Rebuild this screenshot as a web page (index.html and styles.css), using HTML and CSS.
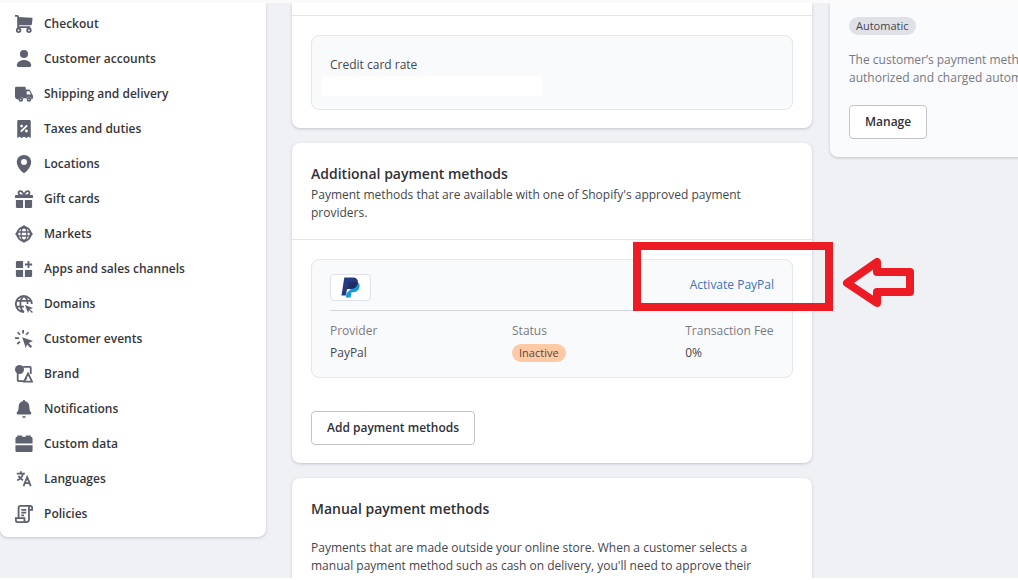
FILE: index.html
```html
<!DOCTYPE html>
<html lang="en">
<head>
    <meta charset="UTF-8">
    <meta name="viewport" content="width=device-width, initial-scale=1.0">
    <title>Payments</title>
    <link rel="stylesheet" href="styles.css">
</head>
<body>

    <div class="page">
        <nav class="sidebar">
            <a href="#"><svg viewBox="0 0 20 20"><path d="M0 1h2.500a1 1 0 0 1 1 1v11.500H17" class="line"/><path d="M3 2.200 18.500 3a1 1 0 0 1 1 1.100l-.8 6.500a1 1 0 0 1-1 .9H3z"/><circle cx="4" cy="17" r="2" class="line"/><circle cx="15.500" cy="17" r="2" class="line"/></svg>Checkout</a>
            <a href="#"><svg viewBox="0 0 20 20"><circle cx="10" cy="4.500" r="4.500"/><path d="M2 17c0-3.500 3.500-6 8-6s8 2.500 8 6c0 1.200-.8 2-2 2H4c-1.200 0-2-.8-2-2z"/></svg>Customer accounts</a>
            <a href="#"><svg viewBox="0 0 20 20"><path fill-rule="evenodd" d="M1.500 2h9A1.500 1.500 0 0 1 12 3.500V5h3.200c.7 0 1.300.4 1.600 1l2.900 5.400c.2.400.3.800.3 1.200V14a2 2 0 0 1-1.600 2 3 3 0 0 0-5.900-.8c-.4-.3-1-.4-1.500-.4s-.9.100-1.300.4A3 3 0 0 0 4 16h-.5A3.500 3.500 0 0 1 0 12.500v-9A1.500 1.500 0 0 1 1.500 2zM13 7v3.500h4.700L15.900 7z"/><circle cx="6.500" cy="16" r="1.600" class="line"/><circle cx="15.500" cy="16" r="1.600" class="line"/></svg>Shipping and delivery</a>
            <a href="#"><svg viewBox="0 0 20 20"><path d="M4 0h12a1.500 1.500 0 0 1 1.500 1.500V20l-2.500-1.500-2.500 1.500-2.500-1.500L7.500 20 5 18.500 2.500 20V1.500A1.500 1.500 0 0 1 4 0z"/><path d="m6.500 13 7-7" class="cut"/><circle cx="7.300" cy="6.800" r="1.600" class="hole"/><circle cx="12.700" cy="12.200" r="1.600" class="hole"/></svg>Taxes and duties</a>
            <a href="#"><svg viewBox="0 0 20 20"><path fill-rule="evenodd" d="M10 0c-4.500 0-8 3.300-8 7.700C2 13.500 8.500 20 10 20s8-6.500 8-12.300C18 3.300 14.500 0 10 0zm0 4.500a3.300 3.300 0 1 1 0 6.600 3.300 3.300 0 0 1 0-6.600z"/></svg>Locations</a>
            <a href="#"><svg viewBox="0 0 20 20"><path d="M10 6C9 2.500 7.800 1.200 6 1.200S3.600 2.800 4 4.200 6.500 6 10 6zm0 0c1-3.500 2.200-4.800 4-4.800s2.400 1.600 2 3S13.500 6 10 6z" class="line"/><path d="M1 5.500h18a1 1 0 0 1 1 1V9H0V6.500a1 1 0 0 1 1-1zM1 11h8v9H2.500A1.500 1.500 0 0 1 1 18.500zM11 11h8v7.500a1.500 1.500 0 0 1-1.500 1.500H11z"/></svg>Gift cards</a>
            <a href="#"><svg viewBox="0 0 20 20"><circle cx="10" cy="10" r="7.500" class="line"/><ellipse cx="10" cy="10" rx="3.200" ry="7.500" class="thin"/><path d="M3 7.800h14M3 12.200h14" class="thin"/><path d="m10 0 4 3.500H6zm0 20-4-3.500h8zM0 10l3.500-4v8zm20 0-3.500 4V6z"/></svg>Markets</a>
            <a href="#"><svg viewBox="0 0 20 20"><path d="M2.500 1H9v8H1V2.500A1.500 1.500 0 0 1 2.500 1zM1 11h8v8H2.500A1.500 1.500 0 0 1 1 17.500zM11 11h8v6.500a1.500 1.500 0 0 1-1.500 1.500H11z"/><path d="M15 1v8M11 5h8" class="line"/></svg>Apps and sales channels</a>
            <a href="#"><svg viewBox="0 0 20 20"><path d="M18.700 10A8.900 8.900 0 1 0 10 18.900M10 1C7.500 2.600 6 6 6 10s1.500 7.400 4 8.900M10 1c2.500 1.600 4 5 4 9M2 6.500h16M2 13h8" class="line"/><path d="m11 11 9 3.500-3.500 1.300L20 19l-1.200 1-3.200-3.200L14.500 20z"/></svg>Domains</a>
            <a href="#"><svg viewBox="0 0 20 20"><path d="M9 0v4M3 2.500l2.500 2.800M15 2.500l-2.500 2.800M0 9h4.500M2.500 15.500l3-2.600" class="line"/><path d="m8 8 12 4.200-4.800 2.200 3.800 3.800-1.800 1.800-3.800-3.800L12 20z"/></svg>Customer events</a>
            <a href="#"><svg viewBox="0 0 20 20"><circle cx="5" cy="5" r="5"/><path d="M9 2h7.500a1 1 0 0 1 1 1v7M3 9v8a1 1 0 0 0 1 1h6l3-4M10 18.500l4.500-9 4.500 9z" class="line"/></svg>Brand</a>
            <a href="#"><svg viewBox="0 0 20 20"><path d="M10 0a1.300 1.300 0 0 1 1.300 1.500C14.500 2.200 16 4.500 16 8c0 4 1.500 4.800 2 6 .4 1-.2 2-1.200 2H3.200c-1 0-1.600-1-1.200-2 .5-1.200 2-2 2-6 0-3.500 1.500-5.800 4.700-6.500A1.300 1.300 0 0 1 10 0zM8 18h4a2 2 0 0 1-4 0z"/></svg>Notifications</a>
            <a href="#"><svg viewBox="0 0 20 20"><path d="M.5 9.500V4a2 2 0 0 1 2-2V.5H8V2h4V.5h5.500V2a2 2 0 0 1 2 2v5.500zM.5 11.500h19v6a1.500 1.500 0 0 1-1.500 1.500H2a1.500 1.500 0 0 1-1.500-1.500z"/></svg>Custom data</a>
            <a href="#"><svg viewBox="0 0 20 20"><path d="M2 4h9M6.500 1.500V4M9 4c-.8 3.500-3 6-6.500 7.500M4 6.500c1 2.500 3 4 5 4.700M9.500 18l4-10 4 10M11 14.500h5" class="line"/></svg>Languages</a>
            <a href="#"><svg viewBox="0 0 20 20"><path d="M4 14V3a2 2 0 0 1 2-2h11a2 2 0 0 1 2 2v2.500h-3.500M15.500 5V3a2 2 0 0 1 1.500-2M15.500 5v11.500a2.500 2.500 0 0 1-2.500 2.500H3a2 2 0 0 1-2-2v-2.500h9.500V17a2 2 0 0 0 2.500 2M7 5.500h5.500M7 8.500h5.500M7 11.500h3" class="line"/></svg>Policies</a>
        </nav>

        <main class="main">
            <section class="card card-cut">
                <div class="card-rest"></div>
                <div class="section">
                    <div class="box rate-box">
                        <p>Credit card rate</p>
                        <div class="rate-value"></div>
                    </div>
                </div>
            </section>

            <section class="card">
                <div class="intro">
                    <h2>Additional payment methods</h2>
                    <p>Payment methods that are available with one of Shopify's approved payment<br>providers.</p>
                </div>
                <div class="section">
                    <div class="box provider-box">
                        <div class="provider-head">
                            <span class="logo">
                                <svg viewBox="0 0 20 22" role="img" aria-label="PayPal"><path fill="#179bd7" d="M17.500 5.500c2 1.200 2.400 3 2 5-.9 4-3.600 5.500-7.300 5.500h-1.100l-1 5.500H5l.8-4.500z"/><path fill="#253b80" d="M3.500.5h8.300c4.200 0 6.600 2 5.900 5.800-.8 4.500-3.700 6.200-8 6.200H7.300c-.7 0-1 .4-1.100 1L5 19.500H.5z"/><path fill="#222d65" d="M8.200 5.300h6.300c1.200 0 2.200.2 3.100.7-.7 4.600-3.600 6.500-7.900 6.500H7.300l-.4.200 1-6.500c0-.5.100-.7.300-.9z"/></svg>
                            </span>
                            <a href="#" class="activate">Activate PayPal</a>
                        </div>
                        <table class="provider-info">
                            <thead>
                                <tr><th>Provider</th><th>Status</th><th>Transaction Fee</th></tr>
                            </thead>
                            <tbody>
                                <tr><td>PayPal</td><td><span class="badge badge-warning">Inactive</span></td><td>0%</td></tr>
                            </tbody>
                        </table>
                        <div class="highlight"></div>
                        <svg class="arrow" viewBox="0 0 72 52"><path d="M5 26 35 5v10h33v20H35v11z"/></svg>
                    </div>
                    <button type="button" class="btn">Add payment methods</button>
                </div>
            </section>

            <section class="card">
                <div class="manual">
                    <h2>Manual payment methods</h2>
                    <p>Payments that are made outside your online store. When a customer selects a<br>manual payment method such as cash on delivery, you'll need to approve their</p>
                </div>
            </section>
        </main>

        <aside class="capture">
            <span class="badge">Automatic</span>
            <p>The customer’s payment method is<br>authorized and charged automatically.</p>
            <button type="button" class="btn">Manage</button>
        </aside>
    </div>

</body>
</html>
```
FILE: styles.css
```css
* {
    box-sizing: border-box;
}
body {
    display: flex;
    height: 100vh;
    margin: 0;
    overflow: hidden;
    border-top: 3px solid #fafafb;
    border-bottom: 2px solid #fff;
    background-color: #f0f1f5;
    color: #45464b;
    font-family: "Segoe UI", "Open Sans", sans-serif;
    font-size: 12px;
    line-height: 18px;
}
h2,
p {
    margin: 0;
}
h2 {
    color: #303035;
    font-size: 14px;
    font-weight: 600;
    line-height: 20px;
}
.page {
    flex: 1;
    display: grid;
    grid-template-columns: 266px minmax(564px, 1fr) 280px;
    align-items: start;
}
.sidebar {
    display: flex;
    flex-direction: column;
    padding: 3px 15px 6px;
    border-radius: 0 0 8px 8px;
    background-color: #fff;
    box-shadow: 0 1px 3px rgba(60, 60, 80, 0.25);
}
.sidebar a {
    display: flex;
    align-items: center;
    gap: 11px;
    height: 35px;
    color: #35363b;
    font-weight: 600;
    text-decoration: none;
}
.sidebar svg {
    width: 18px;
    height: 18px;
    fill: #5e6270;
}
.sidebar .line,
.sidebar .thin {
    fill: none;
    stroke: #5e6270;
    stroke-width: 2;
}
.sidebar .thin {
    stroke-width: 1.5;
}
.sidebar .hole {
    fill: #fff;
}
.sidebar .cut {
    stroke: #fff;
    stroke-width: 2;
}
.main {
    display: flex;
    flex-direction: column;
    gap: 15px;
    margin: 0 18px 0 26px;
}
.card {
    border-radius: 8px;
    background-color: #fff;
    box-shadow: 0 1px 3px rgba(60, 60, 80, 0.25);
}
.card-cut {
    border-radius: 0 0 8px 8px;
}
.card-rest {
    height: 12px;
}
.section {
    padding: 19px 19px 18px;
    border-top: 1px solid #e4e5e9;
}
.box {
    border: 1px solid #e5e7ec;
    border-radius: 8px;
    background-color: #f9fafb;
}
.rate-box {
    padding: 20px 10px 13px;
}
.rate-box p {
    padding: 0 8px;
}
.rate-value {
    width: 220px;
    height: 20px;
    margin-top: 2px;
    background-color: #fff;
}
.intro {
    padding: 21px 19px 17px;
}
.intro p {
    margin-top: 2px;
}
.provider-box {
    position: relative;
    margin-bottom: 33px;
    padding: 14px 18px 13px;
}
.provider-head {
    display: flex;
    justify-content: space-between;
    align-items: flex-start;
    padding-bottom: 9px;
    border-bottom: 1px solid #d5d7dd;
}
.logo {
    display: flex;
    justify-content: center;
    align-items: center;
    width: 41px;
    height: 27px;
    border: 1px solid #dfe1e6;
    border-radius: 4px;
    background-color: #fff;
}
.logo svg {
    width: 19px;
    height: 21px;
}
.activate {
    color: #4470b8;
    line-height: 22px;
    text-decoration: none;
}
.provider-info {
    width: 100%;
    margin-top: 9px;
    border-collapse: collapse;
    table-layout: fixed;
}
.provider-info th,
.provider-info td {
    height: 22px;
    padding: 0;
    text-align: left;
    white-space: nowrap;
}
.provider-info th {
    color: #797a82;
    font-weight: 400;
}
.provider-info th:first-child {
    width: 41%;
}
.provider-info th:last-child {
    width: 20%;
}
.badge {
    display: inline-block;
    padding: 0 7px;
    border-radius: 10px;
    background-color: #e0e1e6;
    font-size: 11px;
    line-height: 18px;
}
.badge-warning {
    background-color: #fec9a5;
    color: #5d4639;
}
.btn {
    height: 34px;
    padding: 0 15px;
    border: 1px solid #c3c4c9;
    border-radius: 4px;
    background-color: #fff;
    color: #303035;
    font: inherit;
    font-weight: 600;
}
/* marker around the activate link */
.highlight {
    position: absolute;
    top: -18px;
    right: -41px;
    width: 200px;
    height: 69px;
    border: 8px solid #ed1c24;
}
.arrow {
    position: absolute;
    top: -3px;
    right: -122px;
    width: 72px;
    height: 52px;
    fill: none;
    stroke: #ed1c24;
    stroke-width: 8;
    stroke-linejoin: round;
}
.manual {
    display: grid;
    gap: 20px;
    padding: 21px 19px;
}
.capture {
    padding: 14px 19px 18px;
    border-radius: 0 0 8px 8px;
    background-color: #fafbfd;
    box-shadow: 0 1px 3px rgba(60, 60, 80, 0.25);
}
.capture p {
    margin: 16px 0 18px;
    color: #777880;
}
```
